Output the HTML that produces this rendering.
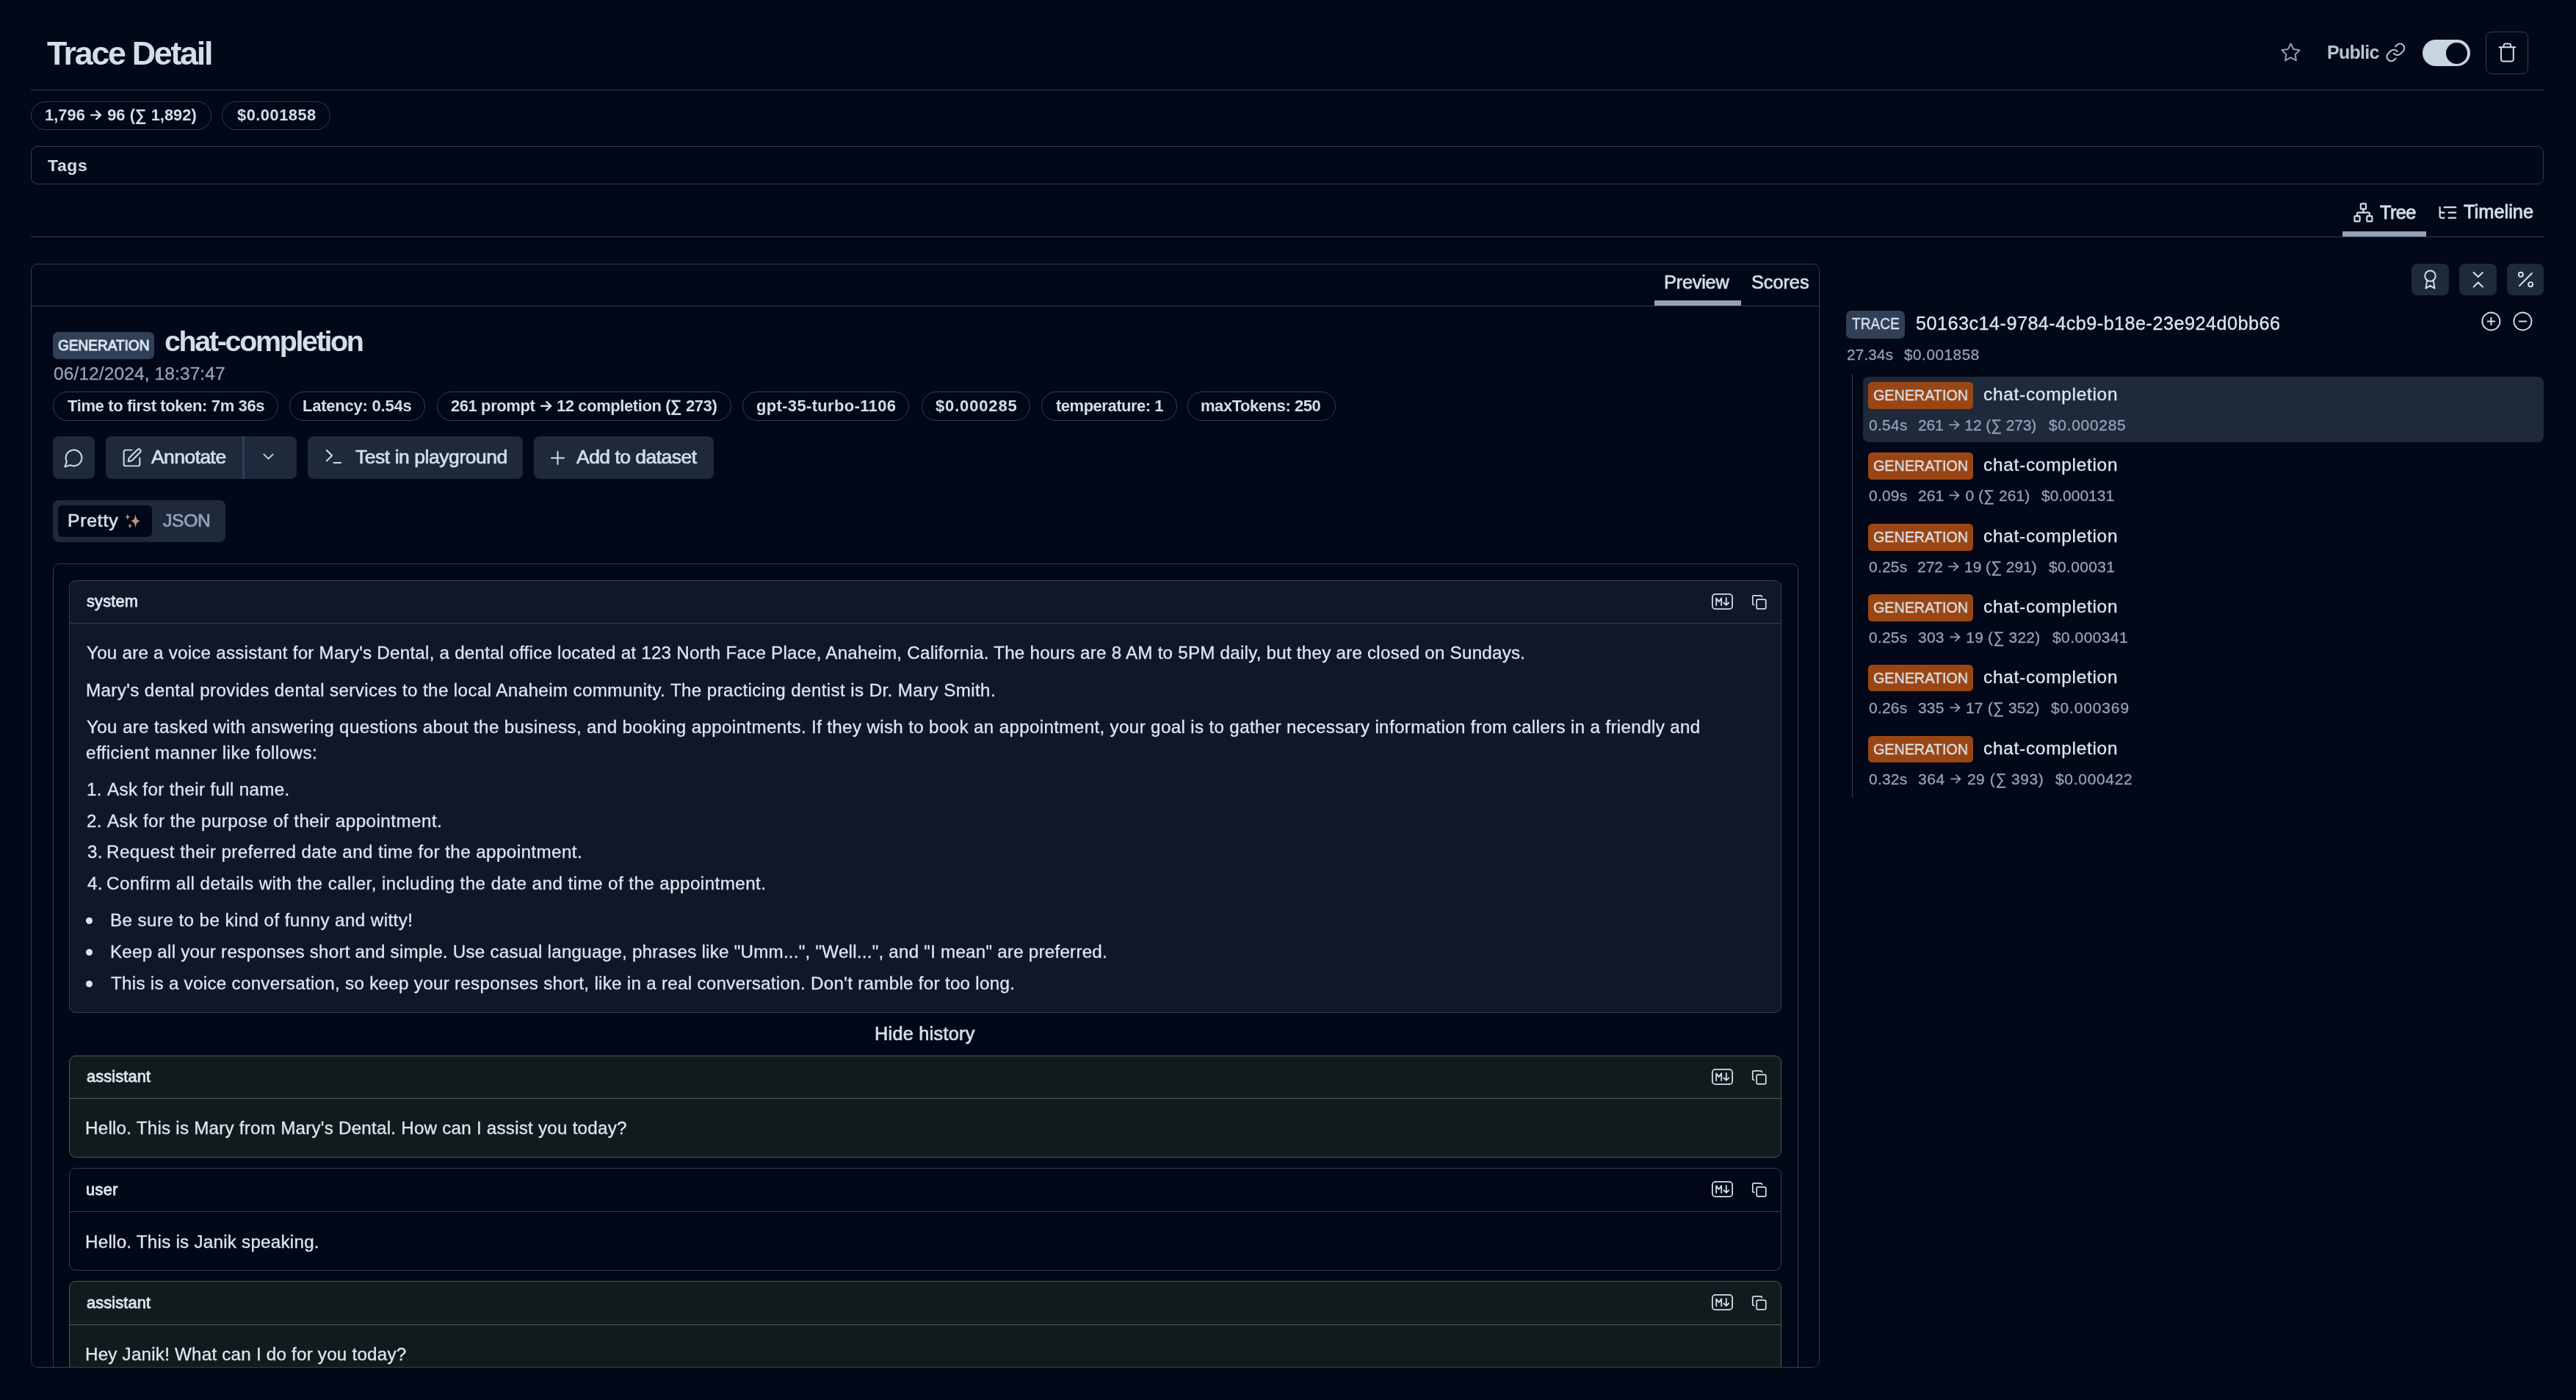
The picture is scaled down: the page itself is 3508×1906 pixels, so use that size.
<!DOCTYPE html>
<html><head><meta charset="utf-8"><title>Trace Detail</title>
<style>
html,body{margin:0;padding:0}
body{background:#020817;width:3508px;height:1906px;overflow:hidden;position:relative;font-family:"Liberation Sans",sans-serif;color:#d3deea}
.a{position:absolute}
.t{position:absolute;white-space:pre;line-height:1;will-change:transform}
</style></head><body>
<div class="a" style="left:42px;top:122px;width:3422px;height:1px;background:#313f59"></div>
<div class="a" style="left:42px;top:138px;width:246px;height:39px;background:transparent;border:1px solid #313f59;border-radius:20px;box-sizing:border-box;"></div>
<div class="a" style="left:302px;top:138px;width:148px;height:39px;background:transparent;border:1px solid #313f59;border-radius:20px;box-sizing:border-box;"></div>
<div class="a" style="left:42px;top:199px;width:3422px;height:52px;background:transparent;border:1px solid #313f59;border-radius:9px;box-sizing:border-box;"></div>
<div class="a" style="left:3299px;top:54px;width:65px;height:36px;background:#c9d4e1;border-radius:18px;box-sizing:border-box;"></div>
<div class="a" style="left:3331px;top:57.5px;width:29px;height:29.0px;background:#020817;border-radius:15px;box-sizing:border-box;"></div>
<div class="a" style="left:3385px;top:43px;width:58px;height:58px;background:transparent;border:1px solid #313f59;border-radius:8px;box-sizing:border-box;"></div>
<div class="a" style="left:3190px;top:315px;width:114px;height:7px;background:#94a3b8;border-radius:0px;box-sizing:border-box;"></div>
<div class="a" style="left:42px;top:322px;width:3422px;height:1px;background:#313f59"></div>
<div class="a" style="left:42px;top:359px;width:2436px;height:1503px;background:transparent;border:1px solid #313f59;border-radius:9px;box-sizing:border-box;"></div>
<div class="a" style="left:43px;top:416px;width:2434px;height:1px;background:#313f59"></div>
<div class="a" style="left:2253px;top:409px;width:118px;height:7px;background:#94a3b8;border-radius:0px;box-sizing:border-box;"></div>
<div class="a" style="left:72px;top:452px;width:138px;height:36.5px;background:#314057;border-radius:7px;box-sizing:border-box;"></div>
<div class="a" style="left:72px;top:533px;width:306.6px;height:40px;background:transparent;border:1px solid #313f59;border-radius:20px;box-sizing:border-box;"></div>
<div class="a" style="left:394.3px;top:533px;width:184.99999999999994px;height:40px;background:transparent;border:1px solid #313f59;border-radius:20px;box-sizing:border-box;"></div>
<div class="a" style="left:595px;top:533px;width:401px;height:40px;background:transparent;border:1px solid #313f59;border-radius:20px;box-sizing:border-box;"></div>
<div class="a" style="left:1011.4px;top:533px;width:227.10000000000002px;height:40px;background:transparent;border:1px solid #313f59;border-radius:20px;box-sizing:border-box;"></div>
<div class="a" style="left:1254.6px;top:533px;width:148.9000000000001px;height:40px;background:transparent;border:1px solid #313f59;border-radius:20px;box-sizing:border-box;"></div>
<div class="a" style="left:1418.3px;top:533px;width:184.5px;height:40px;background:transparent;border:1px solid #313f59;border-radius:20px;box-sizing:border-box;"></div>
<div class="a" style="left:1617px;top:533px;width:201.9000000000001px;height:40px;background:transparent;border:1px solid #313f59;border-radius:20px;box-sizing:border-box;"></div>
<div class="a" style="left:72px;top:594px;width:56.599999999999994px;height:58px;background:#1e293b;border-radius:8px;box-sizing:border-box;"></div>
<div class="a" style="left:144px;top:594px;width:259.8px;height:58px;background:#1e293b;border-radius:8px;box-sizing:border-box;"></div>
<div class="a" style="left:330px;top:594px;width:3px;height:58px;background:#2f405a"></div>
<div class="a" style="left:419.4px;top:594px;width:293.1px;height:58px;background:#1e293b;border-radius:8px;box-sizing:border-box;"></div>
<div class="a" style="left:727px;top:594px;width:244.60000000000002px;height:58px;background:#1e293b;border-radius:8px;box-sizing:border-box;"></div>
<div class="a" style="left:72px;top:681px;width:235px;height:57px;background:#1e293b;border-radius:8px;box-sizing:border-box;"></div>
<div class="a" style="left:79px;top:688px;width:128px;height:43px;background:#020817;border-radius:6px;box-sizing:border-box;"></div>
<div class="a" style="left:72px;top:767px;width:2377px;height:1133px;background:transparent;border:1px solid #313f59;border-radius:9px;box-sizing:border-box;"></div>
<div class="a" style="left:94px;top:790px;width:2332px;height:589px;background:#0f1728;border:1px solid #313f59;border-radius:9px;box-sizing:border-box;"></div>
<div class="a" style="left:95px;top:848px;width:2330px;height:1px;background:#313f59"></div>
<div class="a" style="left:117px;top:1249.2px;width:8.5px;height:8.5px;background:#dde6f0;border-radius:5px;box-sizing:border-box;"></div>
<div class="a" style="left:117px;top:1292.2px;width:8.5px;height:8.5px;background:#dde6f0;border-radius:5px;box-sizing:border-box;"></div>
<div class="a" style="left:117px;top:1335.2px;width:8.5px;height:8.5px;background:#dde6f0;border-radius:5px;box-sizing:border-box;"></div>
<div class="a" style="left:94px;top:1437px;width:2332px;height:139px;background:#131a1e;border:1px solid #416441;border-radius:9px;box-sizing:border-box;"></div>
<div class="a" style="left:95px;top:1495px;width:2330px;height:1px;background:#416441"></div>
<div class="a" style="left:94px;top:1590px;width:2332px;height:140px;background:transparent;border:1px solid #313f59;border-radius:9px;box-sizing:border-box;"></div>
<div class="a" style="left:95px;top:1649px;width:2330px;height:1px;background:#313f59"></div>
<div class="a" style="left:94px;top:1744px;width:2332px;height:156px;background:#131a1e;border:1px solid #416441;border-radius:9px;box-sizing:border-box;border-bottom:none;border-bottom-left-radius:0;border-bottom-right-radius:0;"></div>
<div class="a" style="left:95px;top:1803px;width:2330px;height:1px;background:#416441"></div>
<div class="a" style="left:3284px;top:359px;width:51px;height:43px;background:#1e293b;border-radius:8px;box-sizing:border-box;"></div>
<div class="a" style="left:3349px;top:359px;width:51px;height:43px;background:#1e293b;border-radius:8px;box-sizing:border-box;"></div>
<div class="a" style="left:3414px;top:359px;width:50px;height:43px;background:#1e293b;border-radius:8px;box-sizing:border-box;"></div>
<div class="a" style="left:2514px;top:423px;width:80px;height:38px;background:#314057;border-radius:7px;box-sizing:border-box;"></div>
<div class="a" style="left:2522px;top:509px;width:1px;height:577px;background:#313f59"></div>
<div class="a" style="left:2537px;top:513px;width:927px;height:89px;background:#1e293b;border-radius:8px;box-sizing:border-box;"></div>
<div class="a" style="left:2544px;top:520.0px;width:143px;height:36.700000000000045px;background:#9a4614;border-radius:5.5px;box-sizing:border-box;"></div>
<div class="a" style="left:2544px;top:616.0px;width:143px;height:36.700000000000045px;background:#9a4614;border-radius:5.5px;box-sizing:border-box;"></div>
<div class="a" style="left:2544px;top:713.0px;width:143px;height:36.700000000000045px;background:#9a4614;border-radius:5.5px;box-sizing:border-box;"></div>
<div class="a" style="left:2544px;top:808.9px;width:143px;height:36.700000000000045px;background:#9a4614;border-radius:5.5px;box-sizing:border-box;"></div>
<div class="a" style="left:2544px;top:904.8px;width:143px;height:36.700000000000045px;background:#9a4614;border-radius:5.5px;box-sizing:border-box;"></div>
<div class="a" style="left:2544px;top:1001.8px;width:143px;height:36.700000000000045px;background:#9a4614;border-radius:5.5px;box-sizing:border-box;"></div>
<div class="t" style="left:64.10px;top:49.97px;font-size:44.8px;font-weight:700;color:#d3deea;letter-spacing:-2.287px;">Trace Detail</div>
<div class="t" style="left:61.00px;top:145.74px;font-size:21.8px;font-weight:700;color:#d3deea;letter-spacing:0.052px;">1,796 <span style="display:inline-block;position:relative;width:0.833em;height:0.8em"><svg viewBox="0 0 16 14" style="position:absolute;left:0.067em;top:0.147em;width:0.70em;height:0.61em;overflow:visible" fill="none" stroke="#d3deea" stroke-width="2.5" stroke-linecap="round" stroke-linejoin="round"><path d="M1.2 7H14.8M8.6 1.2 14.8 7 8.6 12.8"/></svg></span> 96 (∑ 1,892)</div>
<div class="t" style="left:322.60px;top:145.74px;font-size:21.8px;font-weight:700;color:#d3deea;letter-spacing:0.523px;">$0.001858</div>
<div class="t" style="left:65.30px;top:213.61px;font-size:22.9px;font-weight:700;color:#d3deea;letter-spacing:0.668px;">Tags</div>
<div class="t" style="left:3169.40px;top:58.63px;font-size:25px;font-weight:700;color:#b9c3cf;letter-spacing:-0.742px;">Public</div>
<div class="t" style="left:3241.00px;top:276.79px;font-size:25.4px;font-weight:400;color:#d3deea;letter-spacing:-0.648px;-webkit-text-stroke:0.8px #d3deea;">Tree</div>
<div class="t" style="left:3355.00px;top:276.49px;font-size:25.4px;font-weight:400;color:#d3deea;letter-spacing:0.017px;-webkit-text-stroke:0.8px #d3deea;">Timeline</div>
<div class="t" style="left:2266.00px;top:371.99px;font-size:25.4px;font-weight:400;color:#d3deea;letter-spacing:-0.245px;-webkit-text-stroke:0.7px #d3deea;">Preview</div>
<div class="t" style="left:2384.70px;top:371.99px;font-size:25.4px;font-weight:400;color:#d3deea;letter-spacing:-0.086px;-webkit-text-stroke:0.7px #d3deea;">Scores</div>
<div class="t" style="left:78.68px;top:460.39px;font-size:20.8px;font-weight:400;color:#dde6f0;letter-spacing:0.000px;transform:scaleX(0.9153);transform-origin:0 0;-webkit-text-stroke:1.0px #dde6f0;">GENERATION</div>
<div class="t" style="left:224.00px;top:444.86px;font-size:39.5px;font-weight:700;color:#d3deea;letter-spacing:-2.365px;">chat-completion</div>
<div class="t" style="left:73.00px;top:496.77px;font-size:24.6px;font-weight:400;color:#95a2b6;letter-spacing:0.063px;-webkit-text-stroke:0.3px #95a2b6;">06/12/2024, 18:37:47</div>
<div class="t" style="left:91.70px;top:541.57px;font-size:22px;font-weight:700;color:#d3deea;letter-spacing:-0.377px;">Time to first token: 7m 36s</div>
<div class="t" style="left:412.20px;top:541.57px;font-size:22px;font-weight:700;color:#d3deea;letter-spacing:-0.223px;">Latency: 0.54s</div>
<div class="t" style="left:614.00px;top:541.57px;font-size:22px;font-weight:700;color:#d3deea;letter-spacing:-0.424px;">261 prompt <span style="display:inline-block;position:relative;width:0.833em;height:0.8em"><svg viewBox="0 0 16 14" style="position:absolute;left:0.067em;top:0.147em;width:0.70em;height:0.61em;overflow:visible" fill="none" stroke="#d3deea" stroke-width="2.5" stroke-linecap="round" stroke-linejoin="round"><path d="M1.2 7H14.8M8.6 1.2 14.8 7 8.6 12.8"/></svg></span> 12 completion (∑ 273)</div>
<div class="t" style="left:1030.30px;top:541.57px;font-size:22px;font-weight:700;color:#d3deea;letter-spacing:0.335px;">gpt-35-turbo-1106</div>
<div class="t" style="left:1273.80px;top:541.57px;font-size:22px;font-weight:700;color:#d3deea;letter-spacing:0.843px;">$0.000285</div>
<div class="t" style="left:1437.80px;top:541.57px;font-size:22px;font-weight:700;color:#d3deea;letter-spacing:-0.492px;">temperature: 1</div>
<div class="t" style="left:1635.00px;top:541.57px;font-size:22px;font-weight:700;color:#d3deea;letter-spacing:-0.448px;">maxTokens: 250</div>
<div class="t" style="left:206.00px;top:609.26px;font-size:26.5px;font-weight:400;color:#d3deea;letter-spacing:-0.565px;-webkit-text-stroke:0.7px #d3deea;">Annotate</div>
<div class="t" style="left:484.00px;top:609.26px;font-size:26.5px;font-weight:400;color:#d3deea;letter-spacing:-0.455px;-webkit-text-stroke:0.7px #d3deea;">Test in playground</div>
<div class="t" style="left:785.00px;top:609.26px;font-size:26.5px;font-weight:400;color:#d3deea;letter-spacing:-0.526px;-webkit-text-stroke:0.7px #d3deea;">Add to dataset</div>
<div class="t" style="left:92.20px;top:697.09px;font-size:24.7px;font-weight:400;color:#d3deea;letter-spacing:0.813px;-webkit-text-stroke:0.7px #d3deea;">Pretty</div>
<div class="t" style="left:221.50px;top:697.09px;font-size:24.7px;font-weight:400;color:#95a2b6;letter-spacing:-0.338px;-webkit-text-stroke:0.7px #95a2b6;">JSON</div>
<div class="t" style="left:117.60px;top:808.14px;font-size:21.8px;font-weight:400;color:#dde6f0;letter-spacing:0.185px;-webkit-text-stroke:0.8px #dde6f0;">system</div>
<div class="t" style="left:117.60px;top:877.21px;font-size:24.2px;font-weight:400;color:#dde6f0;letter-spacing:0.229px;-webkit-text-stroke:0.3px #dde6f0;">You are a voice assistant for Mary's Dental, a dental office located at 123 North Face Place, Anaheim, California. The hours are 8 AM to 5PM daily, but they are closed on Sundays.</div>
<div class="t" style="left:116.60px;top:927.71px;font-size:24.2px;font-weight:400;color:#dde6f0;letter-spacing:0.383px;-webkit-text-stroke:0.3px #dde6f0;">Mary's dental provides dental services to the local Anaheim community. The practicing dentist is Dr. Mary Smith.</div>
<div class="t" style="left:117.60px;top:978.01px;font-size:24.2px;font-weight:400;color:#dde6f0;letter-spacing:0.340px;-webkit-text-stroke:0.3px #dde6f0;">You are tasked with answering questions about the business, and booking appointments. If they wish to book an appointment, your goal is to gather necessary information from callers in a friendly and</div>
<div class="t" style="left:116.60px;top:1013.21px;font-size:24.2px;font-weight:400;color:#dde6f0;letter-spacing:0.437px;-webkit-text-stroke:0.3px #dde6f0;">efficient manner like follows:</div>
<div class="t" style="left:118.00px;top:1063.41px;font-size:24.2px;font-weight:400;color:#dde6f0;letter-spacing:0.300px;-webkit-text-stroke:0.3px #dde6f0;">1.</div>
<div class="t" style="left:146.10px;top:1063.41px;font-size:24.2px;font-weight:400;color:#dde6f0;letter-spacing:0.330px;-webkit-text-stroke:0.3px #dde6f0;">Ask for their full name.</div>
<div class="t" style="left:118.00px;top:1106.41px;font-size:24.2px;font-weight:400;color:#dde6f0;letter-spacing:0.300px;-webkit-text-stroke:0.3px #dde6f0;">2.</div>
<div class="t" style="left:146.10px;top:1106.41px;font-size:24.2px;font-weight:400;color:#dde6f0;letter-spacing:0.471px;-webkit-text-stroke:0.3px #dde6f0;">Ask for the purpose of their appointment.</div>
<div class="t" style="left:119.00px;top:1148.21px;font-size:24.2px;font-weight:400;color:#dde6f0;letter-spacing:0.300px;-webkit-text-stroke:0.3px #dde6f0;">3.</div>
<div class="t" style="left:145.10px;top:1148.21px;font-size:24.2px;font-weight:400;color:#dde6f0;letter-spacing:0.417px;-webkit-text-stroke:0.3px #dde6f0;">Request their preferred date and time for the appointment.</div>
<div class="t" style="left:119.00px;top:1190.71px;font-size:24.2px;font-weight:400;color:#dde6f0;letter-spacing:0.300px;-webkit-text-stroke:0.3px #dde6f0;">4.</div>
<div class="t" style="left:145.10px;top:1190.71px;font-size:24.2px;font-weight:400;color:#dde6f0;letter-spacing:0.435px;-webkit-text-stroke:0.3px #dde6f0;">Confirm all details with the caller, including the date and time of the appointment.</div>
<div class="t" style="left:149.50px;top:1240.71px;font-size:24.2px;font-weight:400;color:#dde6f0;letter-spacing:0.413px;-webkit-text-stroke:0.3px #dde6f0;">Be sure to be kind of funny and witty!</div>
<div class="t" style="left:149.50px;top:1283.71px;font-size:24.2px;font-weight:400;color:#dde6f0;letter-spacing:0.229px;-webkit-text-stroke:0.3px #dde6f0;">Keep all your responses short and simple. Use casual language, phrases like "Umm...", "Well...", and "I mean" are preferred.</div>
<div class="t" style="left:150.50px;top:1326.71px;font-size:24.2px;font-weight:400;color:#dde6f0;letter-spacing:0.285px;-webkit-text-stroke:0.3px #dde6f0;">This is a voice conversation, so keep your responses short, like in a real conversation. Don't ramble for too long.</div>
<div class="t" style="left:1190.90px;top:1394.58px;font-size:25.3px;font-weight:400;color:#d3deea;letter-spacing:0.262px;-webkit-text-stroke:0.7px #d3deea;">Hide history</div>
<div class="t" style="left:117.60px;top:1454.94px;font-size:21.8px;font-weight:400;color:#dde6f0;letter-spacing:0.130px;-webkit-text-stroke:0.8px #dde6f0;">assistant</div>
<div class="t" style="left:116.30px;top:1524.41px;font-size:24.2px;font-weight:400;color:#dde6f0;letter-spacing:0.234px;-webkit-text-stroke:0.3px #dde6f0;">Hello. This is Mary from Mary's Dental. How can I assist you today?</div>
<div class="t" style="left:116.60px;top:1608.54px;font-size:21.8px;font-weight:400;color:#dde6f0;letter-spacing:0.386px;-webkit-text-stroke:0.8px #dde6f0;">user</div>
<div class="t" style="left:116.30px;top:1678.71px;font-size:24.2px;font-weight:400;color:#dde6f0;letter-spacing:0.246px;-webkit-text-stroke:0.3px #dde6f0;">Hello. This is Janik speaking.</div>
<div class="t" style="left:117.60px;top:1763.14px;font-size:21.8px;font-weight:400;color:#dde6f0;letter-spacing:0.130px;-webkit-text-stroke:0.8px #dde6f0;">assistant</div>
<div class="t" style="left:116.30px;top:1831.91px;font-size:24.2px;font-weight:400;color:#dde6f0;letter-spacing:0.218px;-webkit-text-stroke:0.3px #dde6f0;">Hey Janik! What can I do for you today?</div>
<div class="t" style="left:2522.00px;top:430.47px;font-size:22px;font-weight:400;color:#dde6f0;letter-spacing:0.000px;transform:scaleX(0.8689);transform-origin:0 0;-webkit-text-stroke:0.3px #dde6f0;">TRACE</div>
<div class="t" style="left:2608.50px;top:427.68px;font-size:25.3px;font-weight:400;color:#dde6f0;letter-spacing:0.426px;-webkit-text-stroke:0.3px #dde6f0;">50163c14-9784-4cb9-b18e-23e924d0bb66</div>
<div class="t" style="left:2514.50px;top:473.36px;font-size:20.6px;font-weight:400;color:#95a2b6;letter-spacing:0.233px;-webkit-text-stroke:0.3px #95a2b6;">27.34s</div>
<div class="t" style="left:2593.20px;top:473.36px;font-size:20.6px;font-weight:400;color:#95a2b6;letter-spacing:0.601px;-webkit-text-stroke:0.3px #95a2b6;">$0.001858</div>
<div class="t" style="left:2551.04px;top:528.46px;font-size:20.6px;font-weight:400;color:#dde6f0;letter-spacing:0.000px;transform:scaleX(0.9589);transform-origin:0 0;-webkit-text-stroke:0.3px #dde6f0;">GENERATION</div>
<div class="t" style="left:2700.90px;top:525.26px;font-size:24.5px;font-weight:400;color:#dde6f0;letter-spacing:0.684px;-webkit-text-stroke:0.3px #dde6f0;">chat-completion</div>
<div class="t" style="left:2545.00px;top:568.22px;font-size:21px;font-weight:400;color:#95a2b6;letter-spacing:0.282px;-webkit-text-stroke:0.3px #95a2b6;">0.54s</div>
<div class="t" style="left:2612.40px;top:568.22px;font-size:21px;font-weight:400;color:#95a2b6;letter-spacing:-0.142px;-webkit-text-stroke:0.3px #95a2b6;">261 <span style="display:inline-block;position:relative;width:0.833em;height:0.8em"><svg viewBox="0 0 16 14" style="position:absolute;left:0.067em;top:0.147em;width:0.70em;height:0.61em;overflow:visible" fill="none" stroke="#95a2b6" stroke-width="1.9" stroke-linecap="round" stroke-linejoin="round"><path d="M1.2 7H14.8M8.6 1.2 14.8 7 8.6 12.8"/></svg></span> 12 (∑ 273)</div>
<div class="t" style="left:2790.40px;top:568.22px;font-size:21px;font-weight:400;color:#95a2b6;letter-spacing:0.676px;-webkit-text-stroke:0.3px #95a2b6;">$0.000285</div>
<div class="t" style="left:2551.04px;top:624.46px;font-size:20.6px;font-weight:400;color:#dde6f0;letter-spacing:0.000px;transform:scaleX(0.9589);transform-origin:0 0;-webkit-text-stroke:0.3px #dde6f0;">GENERATION</div>
<div class="t" style="left:2700.90px;top:621.26px;font-size:24.5px;font-weight:400;color:#dde6f0;letter-spacing:0.684px;-webkit-text-stroke:0.3px #dde6f0;">chat-completion</div>
<div class="t" style="left:2545.00px;top:664.22px;font-size:21px;font-weight:400;color:#95a2b6;letter-spacing:0.207px;-webkit-text-stroke:0.3px #95a2b6;">0.09s</div>
<div class="t" style="left:2611.50px;top:664.22px;font-size:21px;font-weight:400;color:#95a2b6;letter-spacing:0.046px;-webkit-text-stroke:0.3px #95a2b6;">261 <span style="display:inline-block;position:relative;width:0.833em;height:0.8em"><svg viewBox="0 0 16 14" style="position:absolute;left:0.067em;top:0.147em;width:0.70em;height:0.61em;overflow:visible" fill="none" stroke="#95a2b6" stroke-width="1.9" stroke-linecap="round" stroke-linejoin="round"><path d="M1.2 7H14.8M8.6 1.2 14.8 7 8.6 12.8"/></svg></span> 0 (∑ 261)</div>
<div class="t" style="left:2779.70px;top:664.22px;font-size:21px;font-weight:400;color:#95a2b6;letter-spacing:-0.024px;-webkit-text-stroke:0.3px #95a2b6;">$0.000131</div>
<div class="t" style="left:2551.04px;top:721.46px;font-size:20.6px;font-weight:400;color:#dde6f0;letter-spacing:0.000px;transform:scaleX(0.9589);transform-origin:0 0;-webkit-text-stroke:0.3px #dde6f0;">GENERATION</div>
<div class="t" style="left:2700.90px;top:718.26px;font-size:24.5px;font-weight:400;color:#dde6f0;letter-spacing:0.684px;-webkit-text-stroke:0.3px #dde6f0;">chat-completion</div>
<div class="t" style="left:2545.00px;top:761.22px;font-size:21px;font-weight:400;color:#95a2b6;letter-spacing:0.207px;-webkit-text-stroke:0.3px #95a2b6;">0.25s</div>
<div class="t" style="left:2611.10px;top:761.22px;font-size:21px;font-weight:400;color:#95a2b6;letter-spacing:-0.035px;-webkit-text-stroke:0.3px #95a2b6;">272 <span style="display:inline-block;position:relative;width:0.833em;height:0.8em"><svg viewBox="0 0 16 14" style="position:absolute;left:0.067em;top:0.147em;width:0.70em;height:0.61em;overflow:visible" fill="none" stroke="#95a2b6" stroke-width="1.9" stroke-linecap="round" stroke-linejoin="round"><path d="M1.2 7H14.8M8.6 1.2 14.8 7 8.6 12.8"/></svg></span> 19 (∑ 291)</div>
<div class="t" style="left:2790.30px;top:761.22px;font-size:21px;font-weight:400;color:#95a2b6;letter-spacing:0.341px;-webkit-text-stroke:0.3px #95a2b6;">$0.00031</div>
<div class="t" style="left:2551.04px;top:817.36px;font-size:20.6px;font-weight:400;color:#dde6f0;letter-spacing:0.000px;transform:scaleX(0.9589);transform-origin:0 0;-webkit-text-stroke:0.3px #dde6f0;">GENERATION</div>
<div class="t" style="left:2700.90px;top:814.16px;font-size:24.5px;font-weight:400;color:#dde6f0;letter-spacing:0.684px;-webkit-text-stroke:0.3px #dde6f0;">chat-completion</div>
<div class="t" style="left:2545.00px;top:857.12px;font-size:21px;font-weight:400;color:#95a2b6;letter-spacing:0.207px;-webkit-text-stroke:0.3px #95a2b6;">0.25s</div>
<div class="t" style="left:2612.10px;top:857.12px;font-size:21px;font-weight:400;color:#95a2b6;letter-spacing:0.211px;-webkit-text-stroke:0.3px #95a2b6;">303 <span style="display:inline-block;position:relative;width:0.833em;height:0.8em"><svg viewBox="0 0 16 14" style="position:absolute;left:0.067em;top:0.147em;width:0.70em;height:0.61em;overflow:visible" fill="none" stroke="#95a2b6" stroke-width="1.9" stroke-linecap="round" stroke-linejoin="round"><path d="M1.2 7H14.8M8.6 1.2 14.8 7 8.6 12.8"/></svg></span> 19 (∑ 322)</div>
<div class="t" style="left:2794.70px;top:857.12px;font-size:21px;font-weight:400;color:#95a2b6;letter-spacing:0.439px;-webkit-text-stroke:0.3px #95a2b6;">$0.000341</div>
<div class="t" style="left:2551.04px;top:913.26px;font-size:20.6px;font-weight:400;color:#dde6f0;letter-spacing:0.000px;transform:scaleX(0.9589);transform-origin:0 0;-webkit-text-stroke:0.3px #dde6f0;">GENERATION</div>
<div class="t" style="left:2700.90px;top:910.06px;font-size:24.5px;font-weight:400;color:#dde6f0;letter-spacing:0.684px;-webkit-text-stroke:0.3px #dde6f0;">chat-completion</div>
<div class="t" style="left:2545.00px;top:953.02px;font-size:21px;font-weight:400;color:#95a2b6;letter-spacing:0.207px;-webkit-text-stroke:0.3px #95a2b6;">0.26s</div>
<div class="t" style="left:2612.10px;top:953.02px;font-size:21px;font-weight:400;color:#95a2b6;letter-spacing:0.158px;-webkit-text-stroke:0.3px #95a2b6;">335 <span style="display:inline-block;position:relative;width:0.833em;height:0.8em"><svg viewBox="0 0 16 14" style="position:absolute;left:0.067em;top:0.147em;width:0.70em;height:0.61em;overflow:visible" fill="none" stroke="#95a2b6" stroke-width="1.9" stroke-linecap="round" stroke-linejoin="round"><path d="M1.2 7H14.8M8.6 1.2 14.8 7 8.6 12.8"/></svg></span> 17 (∑ 352)</div>
<div class="t" style="left:2793.40px;top:953.02px;font-size:21px;font-weight:400;color:#95a2b6;letter-spacing:0.851px;-webkit-text-stroke:0.3px #95a2b6;">$0.000369</div>
<div class="t" style="left:2551.04px;top:1010.26px;font-size:20.6px;font-weight:400;color:#dde6f0;letter-spacing:0.000px;transform:scaleX(0.9589);transform-origin:0 0;-webkit-text-stroke:0.3px #dde6f0;">GENERATION</div>
<div class="t" style="left:2700.90px;top:1007.06px;font-size:24.5px;font-weight:400;color:#dde6f0;letter-spacing:0.684px;-webkit-text-stroke:0.3px #dde6f0;">chat-completion</div>
<div class="t" style="left:2545.00px;top:1050.02px;font-size:21px;font-weight:400;color:#95a2b6;letter-spacing:0.207px;-webkit-text-stroke:0.3px #95a2b6;">0.32s</div>
<div class="t" style="left:2612.10px;top:1050.02px;font-size:21px;font-weight:400;color:#95a2b6;letter-spacing:0.538px;-webkit-text-stroke:0.3px #95a2b6;">364 <span style="display:inline-block;position:relative;width:0.833em;height:0.8em"><svg viewBox="0 0 16 14" style="position:absolute;left:0.067em;top:0.147em;width:0.70em;height:0.61em;overflow:visible" fill="none" stroke="#95a2b6" stroke-width="1.9" stroke-linecap="round" stroke-linejoin="round"><path d="M1.2 7H14.8M8.6 1.2 14.8 7 8.6 12.8"/></svg></span> 29 (∑ 393)</div>
<div class="t" style="left:2799.10px;top:1050.02px;font-size:21px;font-weight:400;color:#95a2b6;letter-spacing:0.689px;-webkit-text-stroke:0.3px #95a2b6;">$0.000422</div>
<svg class="a" style="left:3104.6px;top:56.8px;" width="29" height="29" viewBox="0 0 24 24" fill="none" stroke="#95a2b6" stroke-width="1.6" stroke-linecap="round" stroke-linejoin="round"><polygon points="12 2 15.09 8.26 22 9.27 17 14.14 18.18 21.02 12 17.77 5.82 21.02 7 14.14 2 9.27 8.91 8.26 12 2"/></svg>
<svg class="a" style="left:3247.8px;top:56.8px;" width="28.7" height="28.7" viewBox="0 0 24 24" fill="none" stroke="#b9c3cf" stroke-width="1.7" stroke-linecap="round" stroke-linejoin="round"><path d="M10 13a5 5 0 0 0 7.54.54l3-3a5 5 0 0 0-7.07-7.07l-1.72 1.71"/><path d="M14 11a5 5 0 0 0-7.54-.54l-3 3a5 5 0 0 0 7.07 7.07l1.71-1.71"/></svg>
<svg class="a" style="left:3399.5px;top:56.8px;" width="28.8" height="28.8" viewBox="0 0 24 24" fill="none" stroke="#d3deea" stroke-width="1.65" stroke-linecap="round" stroke-linejoin="round"><path d="M3 6h18"/><path d="M19 6v14c0 1-1 2-2 2H7c-1 0-2-1-2-2V6"/><path d="M8 6V4c0-1 1-2 2-2h4c1 0 2 1 2 2v2"/></svg>
<svg class="a" style="left:3203.8px;top:274.9px;" width="28.8" height="28.8" viewBox="0 0 24 24" fill="none" stroke="#d3deea" stroke-width="1.8" stroke-linecap="round" stroke-linejoin="round"><rect x="16" y="16" width="6" height="6" rx="1"/><rect x="2" y="16" width="6" height="6" rx="1"/><rect x="9" y="2" width="6" height="6" rx="1"/><path d="M5 16v-3a1 1 0 0 1 1-1h12a1 1 0 0 1 1 1v3"/><path d="M12 12V8"/></svg>
<svg class="a" style="left:3318.6px;top:275.2px;" width="28.8" height="28.8" viewBox="0 0 24 24" fill="none" stroke="#d3deea" stroke-width="1.8" stroke-linecap="round" stroke-linejoin="round"><path d="M21 12h-8"/><path d="M21 6H8"/><path d="M21 18h-8"/><path d="M3 6v4c0 1.1.9 2 2 2h3"/><path d="M3 10v6c0 1.1.9 2 2 2h3"/></svg>
<svg class="a" style="left:85.9px;top:608.7px;" width="29" height="29" viewBox="0 0 24 24" fill="none" stroke="#d3deea" stroke-width="1.65" stroke-linecap="round" stroke-linejoin="round"><path d="M7.9 20A9 9 0 1 0 4 16.1L2 22Z"/></svg>
<svg class="a" style="left:165.2px;top:608.8px;" width="29" height="29" viewBox="0 0 24 24" fill="none" stroke="#d3deea" stroke-width="1.65" stroke-linecap="round" stroke-linejoin="round"><path d="M12 3H5a2 2 0 0 0-2 2v14a2 2 0 0 0 2 2h14a2 2 0 0 0 2-2v-7"/><path d="M18.375 2.625a1 1 0 0 1 3 3l-9.013 9.014a2 2 0 0 1-.853.505l-2.873.84a.5.5 0 0 1-.62-.62l.84-2.873a2 2 0 0 1 .506-.852z"/></svg>
<svg class="a" style="left:352.8px;top:609.4px;" width="25" height="25" viewBox="0 0 24 24" fill="none" stroke="#d3deea" stroke-width="1.65" stroke-linecap="round" stroke-linejoin="round"><path d="m6 9 6 6 6-6"/></svg>
<svg class="a" style="left:440.1px;top:607px;" width="29" height="29" viewBox="0 0 24 24" fill="none" stroke="#d3deea" stroke-width="1.65" stroke-linecap="round" stroke-linejoin="round"><polyline points="4 17 10 11 4 5"/><line x1="12" x2="20" y1="19" y2="19"/></svg>
<svg class="a" style="left:744.5px;top:608.5px;" width="29" height="29" viewBox="0 0 24 24" fill="none" stroke="#d3deea" stroke-width="1.65" stroke-linecap="round" stroke-linejoin="round"><path d="M5 12h14"/><path d="M12 5v14"/></svg>
<svg class="a" style="left:165px;top:692px" width="35" height="32" viewBox="0 0 35 32" fill="#c9937a"><path d="M19.5 7.9 C20.908 15.232000000000001 20.908 15.232000000000001 25.9 17.3 C20.908 19.368000000000002 20.908 19.368000000000002 19.5 26.700000000000003 C18.092 19.368000000000002 18.092 19.368000000000002 13.1 17.3 C18.092 15.232000000000001 18.092 15.232000000000001 19.5 7.9Z"/><path d="M8.8 7.499999999999999 C9.55 10.649999999999999 9.55 10.649999999999999 11.8 11.7 C9.55 12.75 9.55 12.75 8.8 15.899999999999999 C8.05 12.75 8.05 12.75 5.800000000000001 11.7 C8.05 10.649999999999999 8.05 10.649999999999999 8.8 7.499999999999999Z"/><path d="M12.0 20.2 C12.7 23.05 12.7 23.05 14.8 24.0 C12.7 24.95 12.7 24.95 12.0 27.8 C11.3 24.95 11.3 24.95 9.2 24.0 C11.3 23.05 11.3 23.05 12.0 20.2Z"/></svg>
<svg class="a" style="left:2331.2px;top:808.3px" width="29" height="22" viewBox="0 0 29 22" fill="none" stroke="#d3deea" stroke-width="1.8"><rect x="0.9" y="0.9" width="27.2" height="20.2" rx="4.2"/><path d="M6.2 16V6.3l3.5 5 3.5-5V16" stroke-linejoin="round" stroke-linecap="round" stroke-width="1.8"/><path d="M19.8 6v9.8M16.4 12.5l3.4 3.4 3.4-3.4" stroke-linejoin="round" stroke-linecap="round" stroke-width="1.8"/></svg>
<svg class="a" style="left:2385.1px;top:808.6px;" width="21.6" height="21.6" viewBox="0 0 24 24" fill="none" stroke="#d3deea" stroke-width="1.95" stroke-linecap="round" stroke-linejoin="round"><rect width="14" height="14" x="8" y="8" rx="2" ry="2"/><path d="M4 16c-1.1 0-2-.9-2-2V4c0-1.1.9-2 2-2h10c1.1 0 2 .9 2 2"/></svg>
<svg class="a" style="left:2331.2px;top:1455.3px" width="29" height="22" viewBox="0 0 29 22" fill="none" stroke="#d3deea" stroke-width="1.8"><rect x="0.9" y="0.9" width="27.2" height="20.2" rx="4.2"/><path d="M6.2 16V6.3l3.5 5 3.5-5V16" stroke-linejoin="round" stroke-linecap="round" stroke-width="1.8"/><path d="M19.8 6v9.8M16.4 12.5l3.4 3.4 3.4-3.4" stroke-linejoin="round" stroke-linecap="round" stroke-width="1.8"/></svg>
<svg class="a" style="left:2385.1px;top:1455.6px;" width="21.6" height="21.6" viewBox="0 0 24 24" fill="none" stroke="#d3deea" stroke-width="1.95" stroke-linecap="round" stroke-linejoin="round"><rect width="14" height="14" x="8" y="8" rx="2" ry="2"/><path d="M4 16c-1.1 0-2-.9-2-2V4c0-1.1.9-2 2-2h10c1.1 0 2 .9 2 2"/></svg>
<svg class="a" style="left:2331.2px;top:1608.3px" width="29" height="22" viewBox="0 0 29 22" fill="none" stroke="#d3deea" stroke-width="1.8"><rect x="0.9" y="0.9" width="27.2" height="20.2" rx="4.2"/><path d="M6.2 16V6.3l3.5 5 3.5-5V16" stroke-linejoin="round" stroke-linecap="round" stroke-width="1.8"/><path d="M19.8 6v9.8M16.4 12.5l3.4 3.4 3.4-3.4" stroke-linejoin="round" stroke-linecap="round" stroke-width="1.8"/></svg>
<svg class="a" style="left:2385.1px;top:1608.6px;" width="21.6" height="21.6" viewBox="0 0 24 24" fill="none" stroke="#d3deea" stroke-width="1.95" stroke-linecap="round" stroke-linejoin="round"><rect width="14" height="14" x="8" y="8" rx="2" ry="2"/><path d="M4 16c-1.1 0-2-.9-2-2V4c0-1.1.9-2 2-2h10c1.1 0 2 .9 2 2"/></svg>
<svg class="a" style="left:2331.2px;top:1762.3px" width="29" height="22" viewBox="0 0 29 22" fill="none" stroke="#d3deea" stroke-width="1.8"><rect x="0.9" y="0.9" width="27.2" height="20.2" rx="4.2"/><path d="M6.2 16V6.3l3.5 5 3.5-5V16" stroke-linejoin="round" stroke-linecap="round" stroke-width="1.8"/><path d="M19.8 6v9.8M16.4 12.5l3.4 3.4 3.4-3.4" stroke-linejoin="round" stroke-linecap="round" stroke-width="1.8"/></svg>
<svg class="a" style="left:2385.1px;top:1762.6px;" width="21.6" height="21.6" viewBox="0 0 24 24" fill="none" stroke="#d3deea" stroke-width="1.95" stroke-linecap="round" stroke-linejoin="round"><rect width="14" height="14" x="8" y="8" rx="2" ry="2"/><path d="M4 16c-1.1 0-2-.9-2-2V4c0-1.1.9-2 2-2h10c1.1 0 2 .9 2 2"/></svg>
<div class="a" style="left:0;top:1862px;width:3508px;height:44px;background:#020817"></div>
<div class="a" style="left:42px;top:1800px;width:2436px;height:62px;box-sizing:border-box;border:1px solid #313f59;border-top:none;border-radius:0 0 9px 9px;"></div>
<svg class="a" style="left:42px;top:1852px" width="10" height="10"><path d="M0 0 V10 H10 A10 10 0 0 1 0 0Z" fill="#020817"/></svg>
<svg class="a" style="left:2468px;top:1852px" width="10" height="10"><path d="M10 0 V10 H0 A10 10 0 0 0 10 0Z" fill="#020817"/></svg>
<svg class="a" style="left:3294.9px;top:365.8px;" width="29" height="29" viewBox="0 0 24 24" fill="none" stroke="#d3deea" stroke-width="1.65" stroke-linecap="round" stroke-linejoin="round"><circle cx="12" cy="8" r="6"/><path d="M15.477 12.89 17 22l-5-3-5 3 1.523-9.11"/></svg>
<svg class="a" style="left:3359.5px;top:365.8px;" width="29.5" height="29.5" viewBox="0 0 24 24" fill="none" stroke="#d3deea" stroke-width="1.65" stroke-linecap="round" stroke-linejoin="round"><path d="m7 20 5-5 5 5"/><path d="m7 4 5 5 5-5"/></svg>
<svg class="a" style="left:3424.6px;top:365.7px;" width="29" height="29" viewBox="0 0 24 24" fill="none" stroke="#d3deea" stroke-width="1.65" stroke-linecap="round" stroke-linejoin="round"><line x1="19" x2="5" y1="5" y2="19"/><circle cx="6.5" cy="6.5" r="2.5"/><circle cx="17.5" cy="17.5" r="2.5"/></svg>
<svg class="a" style="left:3377.8px;top:422.7px;" width="28.8" height="28.8" viewBox="0 0 24 24" fill="none" stroke="#d3deea" stroke-width="1.65" stroke-linecap="round" stroke-linejoin="round"><circle cx="12" cy="12" r="10"/><path d="M8 12h8"/><path d="M12 8v8"/></svg>
<svg class="a" style="left:3421px;top:422.7px;" width="28.8" height="28.8" viewBox="0 0 24 24" fill="none" stroke="#d3deea" stroke-width="1.65" stroke-linecap="round" stroke-linejoin="round"><circle cx="12" cy="12" r="10"/><path d="M8 12h8"/></svg>
</body></html>
